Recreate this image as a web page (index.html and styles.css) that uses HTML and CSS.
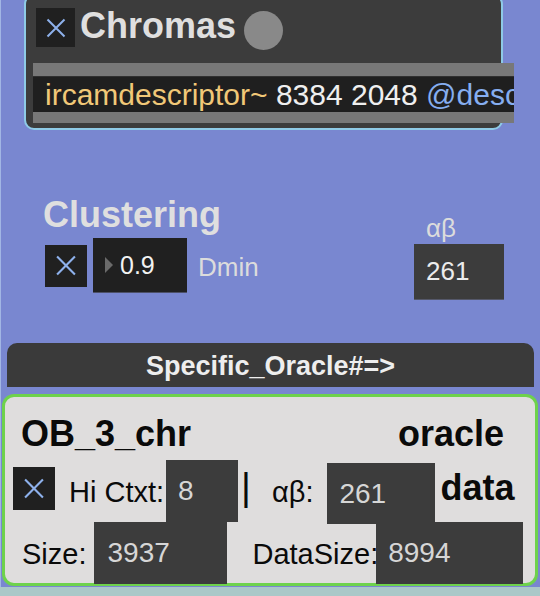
FILE: index.html
```html
<!DOCTYPE html>
<html>
<head>
<meta charset="utf-8">
<link rel="stylesheet" href="styles.css">
</head>
<body>
<div class="page">
  <section class="chromas">
    <div class="chromas-row">
      <div class="toggle toggle-39">
        <svg class="xmark" viewBox="0 0 20 20"><path d="M1.5 1.5L18.5 18.5M18.5 1.5L1.5 18.5"/></svg>
      </div>
      <div class="title title-light">Chromas</div>
      <div class="led"></div>
    </div>
    <div class="objbox">
      <div class="objbox-text"><span class="obj-name">ircamdescriptor~</span> 8384 2048 <span class="obj-attr">@desc</span></div>
    </div>
  </section>

  <section class="clustering">
    <div class="clust-left">
      <div class="title title-light">Clustering</div>
      <div class="clust-row">
        <div class="toggle toggle-42">
          <svg class="xmark" viewBox="0 0 20 20"><path d="M1.5 1.5L18.5 18.5M18.5 1.5L1.5 18.5"/></svg>
        </div>
        <div class="flonum"><span class="tri"></span><span class="flonum-val">0.9</span></div>
        <div class="label-light">Dmin</div>
      </div>
    </div>
    <div class="clust-right">
      <div class="ab-label">αβ</div>
      <div class="numbox">261</div>
    </div>
  </section>

  <div class="oracle-bar">Specific_Oracle#=&gt;</div>

  <section class="oracle">
    <div class="oracle-head">
      <div class="title title-dark">OB_3_chr</div>
      <div class="title title-dark">oracle</div>
    </div>
    <div class="oracle-row2">
      <div class="toggle toggle-42b">
        <svg class="xmark" viewBox="0 0 20 20"><path d="M1.5 1.5L18.5 18.5M18.5 1.5L1.5 18.5"/></svg>
      </div>
      <div class="lbl lbl-hi">Hi Ctxt:</div>
      <div class="valbox valbox-ctx">8</div>
      <div class="pipe">|</div>
      <div class="lbl lbl-ab">αβ:</div>
      <div class="valbox valbox-ab">261</div>
      <div class="data-lbl">data</div>
    </div>
    <div class="oracle-row3">
      <div class="lbl lbl-size">Size:</div>
      <div class="valbox valbox-size">3937</div>
      <div class="lbl lbl-dsize">DataSize:</div>
      <div class="valbox valbox-dsize">8994</div>
    </div>
  </section>

  <div class="strip"></div>
</div>
</body>
</html>
```

FILE: styles.css
```css
html, body {
  margin: 0;
  padding: 0;
  width: 540px;
  height: 596px;
  overflow: hidden;
}

body {
  background: #7987d0;
  font-family: "Liberation Sans", Arial, sans-serif;
}

.page {
  width: 540px;
  height: 596px;
  box-shadow: inset 1px 0 #a2b6e4;
}

/* ---------- shared ---------- */
.toggle {
  background: #202020;
  display: flex;
  align-items: center;
  justify-content: center;
  flex: none;
}
.toggle-39 { width: 39px; height: 39px; }
.toggle-42 { width: 42px; height: 42px; }
.toggle-42b { width: 42px; height: 43px; }

.xmark {
  width: 20px;
  height: 20px;
  fill: none;
  stroke: #8eb1ec;
  stroke-width: 2;
}
.toggle-42 .xmark, .toggle-42b .xmark { width: 22px; height: 21px; }

.title {
  font-weight: bold;
  font-size: 36px;
  line-height: 36px;
  white-space: nowrap;
}
.title-light { color: #dfdfdf; }
.title-dark { color: #0a0a0a; }

/* ---------- Chromas panel ---------- */
.chromas {
  box-sizing: border-box;
  margin-left: 24px;
  margin-top: -6px;
  width: 479px;
  height: 136px;
  border: 2px solid #8ecae6;
  border-radius: 10px;
  background: #3c3c3c;
  padding: 12px 0 0 10px;
}

.chromas-row {
  display: flex;
  align-items: flex-start;
}
.chromas-row .title {
  margin-left: 5px;
}
.led {
  width: 39px;
  height: 39px;
  border-radius: 50%;
  background: #898989;
  margin-left: 8px;
  margin-top: 3px;
}

.objbox {
  margin-top: 13px;
  margin-left: -3px;
  width: 481px;
  height: 60px;
  box-sizing: border-box;
  background: #787878;
  padding-top: 13px;
  overflow: hidden;
}
.objbox-text {
  background: #1f1f1f;
  height: 36px;
  border-top: 1px solid #303030;
  box-sizing: border-box;
  line-height: 36px;
  font-size: 30px;
  color: #efefef;
  padding-left: 12px;
  white-space: nowrap;
  overflow: hidden;
}
.obj-name { color: #f1c878; }
.obj-attr { color: #86aef0; }

/* ---------- Clustering ---------- */
.clustering {
  display: flex;
  height: 213px;
  box-sizing: border-box;
  padding-left: 43px;
}
.clust-left {
  padding-top: 67px;
}
.clust-row {
  display: flex;
  align-items: center;
  margin-top: 5px;
  margin-left: 2px;
}
.flonum {
  margin-left: 6px;
  width: 94px;
  height: 55px;
  box-sizing: border-box;
  background: #202020;
  border-bottom: 1px solid #4c5068;
  display: flex;
  align-items: center;
  padding-left: 12px;
}
.tri {
  width: 0;
  height: 0;
  border-left: 8px solid #6a6a6a;
  border-top: 8px solid transparent;
  border-bottom: 8px solid transparent;
}
.flonum-val {
  margin-left: 7px;
  font-size: 25px;
  line-height: 55px;
  color: #f2f2f2;
}
.label-light {
  margin-left: 11px;
  font-size: 26px;
  line-height: 26px;
  color: #dcdcdc;
  margin-top: 2px;
}

.clust-right {
  margin-left: auto;
  margin-right: 36px;
  padding-top: 85px;
}
.ab-label {
  margin-left: 12px;
  font-size: 26px;
  line-height: 26px;
  color: #dcdcdc;
}
.numbox {
  margin-top: 3px;
  width: 90px;
  height: 56px;
  box-sizing: border-box;
  background: #3c3c3c;
  border-bottom: 1px solid #55586a;
  font-size: 26px;
  line-height: 55px;
  color: #ececec;
  padding-left: 12px;
}

/* ---------- Oracle bar ---------- */
.oracle-bar {
  margin-left: 7px;
  width: 527px;
  height: 44px;
  box-sizing: border-box;
  background: #3a3a3a;
  border-radius: 10px 10px 0 0;
  color: #eeeeee;
  font-weight: bold;
  font-size: 27px;
  line-height: 44px;
  padding-top: 1px;
  text-align: center;
  white-space: nowrap;
}

/* ---------- Oracle panel ---------- */
.oracle {
  margin-top: 7px;
  margin-left: 2px;
  width: 536px;
  height: 192px;
  box-sizing: border-box;
  border: 3px solid #6ed24c;
  border-radius: 12px;
  background: #dfdddd;
  padding-top: 19px;
}
.oracle-head {
  display: flex;
  justify-content: space-between;
  padding-left: 16px;
  padding-right: 31px;
}

.oracle-row2 {
  display: flex;
  align-items: flex-start;
  margin-top: 8px;
  height: 64px;
}
.oracle-row2 .toggle {
  margin-left: 8px;
  margin-top: 7px;
}

.lbl {
  font-size: 29px;
  line-height: 29px;
  color: #0a0a0a;
  white-space: nowrap;
  margin-top: 18px;
}
.lbl-hi { margin-left: 14px; }
.lbl-ab { margin-left: 21px; }

.valbox {
  background: #3c3c3c;
  color: #d6d6d6;
  font-size: 28px;
  box-sizing: border-box;
  padding-left: 12px;
  flex: none;
}
.valbox-ctx {
  margin-left: 2px;
  width: 72px;
  height: 62px;
  line-height: 62px;
}
.pipe {
  margin-left: 3px;
  margin-top: 8px;
  font-size: 38px;
  line-height: 38px;
  color: #0a0a0a;
}
.valbox-ab {
  margin-left: 14px;
  margin-top: 3px;
  width: 108px;
  height: 61px;
  line-height: 61px;
}
.data-lbl {
  margin-left: 5px;
  margin-top: 10px;
  font-weight: bold;
  font-size: 36px;
  line-height: 36px;
  color: #0a0a0a;
}

.oracle-row3 {
  display: flex;
  align-items: flex-start;
  margin-top: -2px;
}
.lbl-size { margin-left: 17px; }
.valbox-size {
  margin-left: 8px;
  width: 133px;
  height: 62px;
  line-height: 62px;
  padding-left: 13px;
}
.lbl-dsize { margin-left: 25px; }
.valbox-dsize {
  margin-left: -2px;
  width: 147px;
  height: 62px;
  line-height: 62px;
}

.strip {
  margin-top: 1px;
  height: 9px;
  background: #aac8c8;
}
```
